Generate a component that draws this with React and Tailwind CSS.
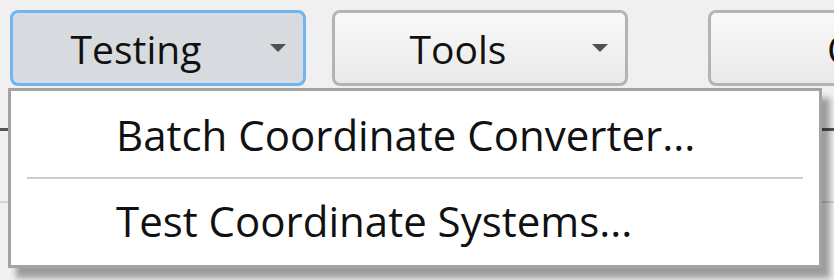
import React from 'react';

const Caret = () => (
  <svg width="18" height="10" viewBox="0 0 18 10" className="shrink-0">
    <path d="M1 1 L17 1 L9 9 Z" fill="#505050" />
  </svg>
);

const ToolButton = ({ label, active, className = '' }) => (
  <div
    className={`relative flex h-[76px] w-[296px] shrink-0 items-center rounded-[8px] border-[3px] ${
      active
        ? 'border-[#6fb5f0] bg-[#d7dbdf]'
        : 'border-[#b4b4b4] bg-gradient-to-b from-[#f9f9f9] to-[#e9e9e9]'
    } ${className}`}
  >
    <span className="flex-1 text-center text-[39px] leading-none text-[#111] pr-[44px]">{label}</span>
    <div className="absolute right-[16px] top-[30px]">
      <Caret />
    </div>
  </div>
);

const MenuItem = ({ children }) => (
  <div className="flex h-[80px] items-center pl-[105px] text-[42px] leading-none text-[#111]">
    {children}
  </div>
);

export default function App() {
  return (
    <div
      className="relative h-[280px] w-[834px] overflow-hidden bg-[#f0f0f0]"
      style={{ fontFamily: '"Open Sans", "Noto Sans", sans-serif' }}
    >
      <div className="flex pl-[10px] pt-[10px]">
        <ToolButton label="Testing" active />
        <ToolButton label="Tools" className="ml-[26px]" />
        <div className="ml-[80px] flex h-[76px] w-[300px] shrink-0 items-center rounded-[8px] border-[3px] border-[#b4b4b4] bg-gradient-to-b from-[#f9f9f9] to-[#e9e9e9] pl-[116px] text-[39px] leading-none text-[#111]">
          Options
        </div>
      </div>

      <div className="mt-[42px] h-[3px] w-full bg-[#555]" />
      <div className="mt-[70px] h-[2px] w-full bg-[#d4d4d4]" />

      <div className="absolute left-[8px] top-[88px] w-[814px] border-[3px] border-[#a3a3a3] bg-white pb-[4px] pt-[4px] shadow-[8px_10px_6px_rgba(0,0,0,0.35)]">
        <MenuItem>Batch Coordinate Converter...</MenuItem>
        <div className="mx-[16px] my-[2px] h-[2px] bg-[#cdcdcd]" />
        <MenuItem>Test Coordinate Systems...</MenuItem>
      </div>
    </div>
  );
}
